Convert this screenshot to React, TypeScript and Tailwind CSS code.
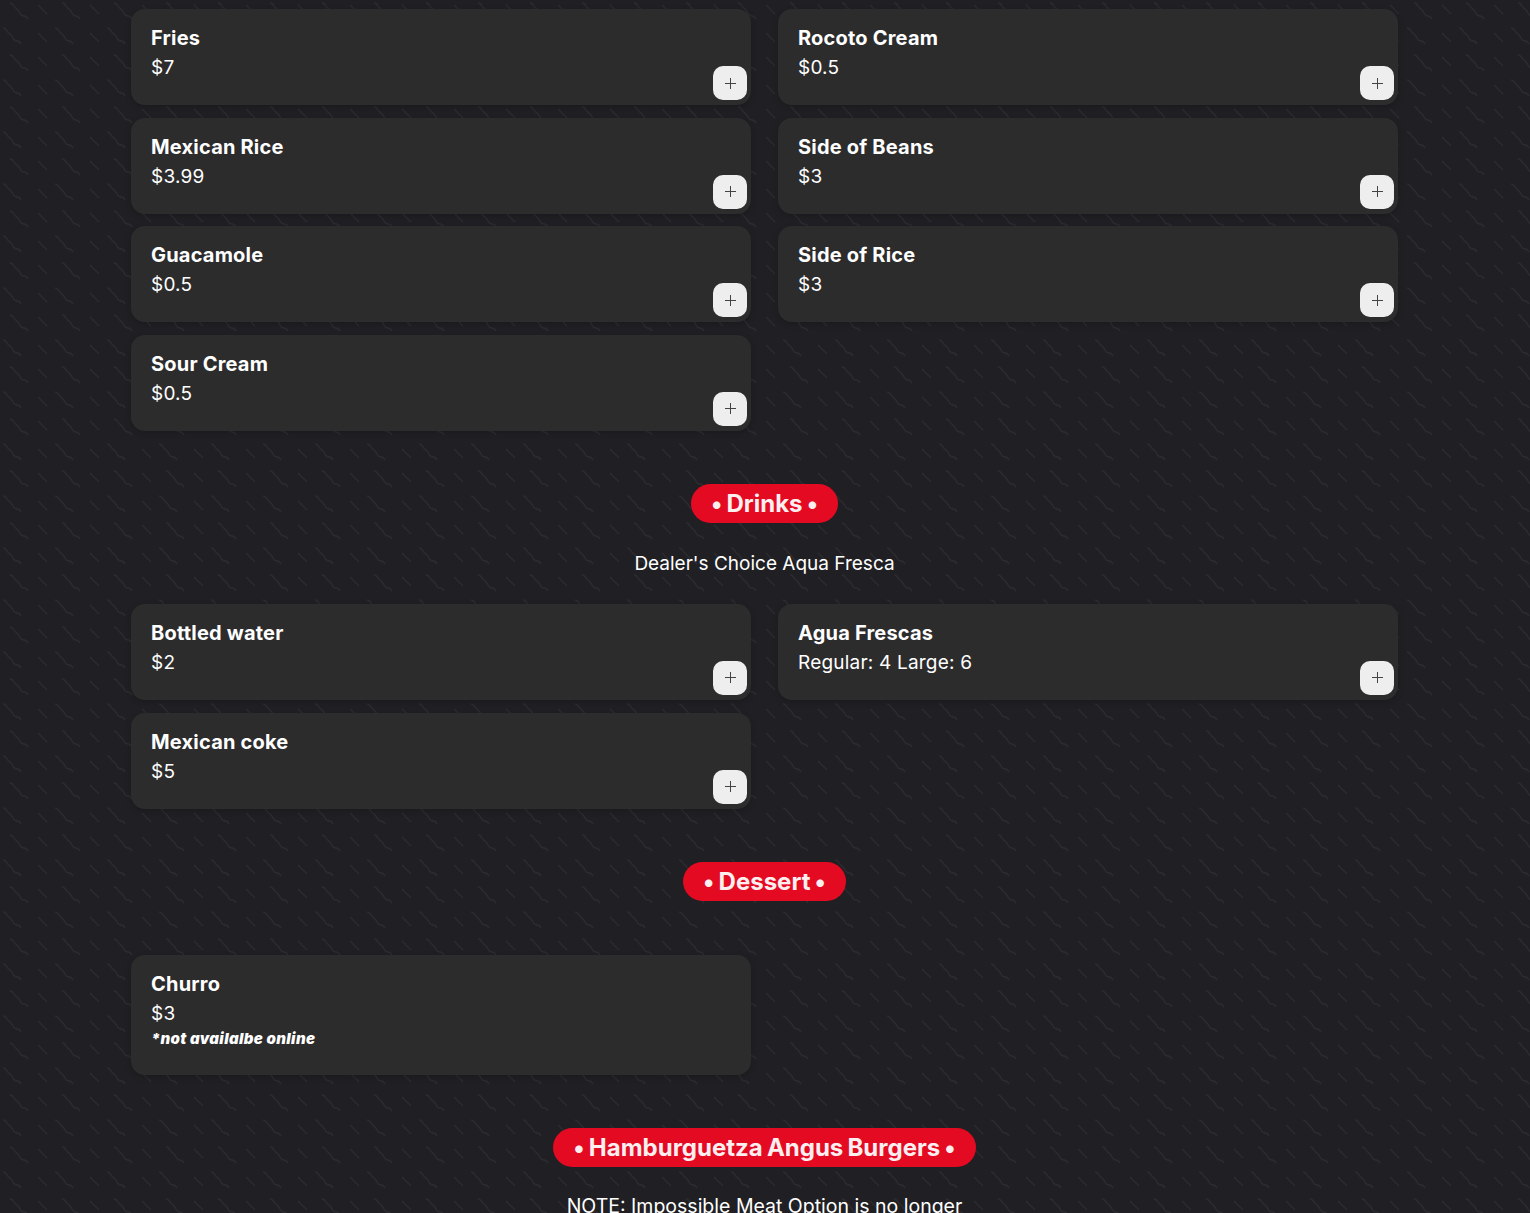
type Item = { name: string; price: string; note?: string; noAdd?: boolean };

const sides: Item[] = [
  { name: "Fries", price: "$7" },
  { name: "Rocoto Cream", price: "$0.5" },
  { name: "Mexican Rice", price: "$3.99" },
  { name: "Side of Beans", price: "$3" },
  { name: "Guacamole", price: "$0.5" },
  { name: "Side of Rice", price: "$3" },
  { name: "Sour Cream", price: "$0.5" },
];

const drinks: Item[] = [
  { name: "Bottled water", price: "$2" },
  { name: "Agua Frescas", price: "Regular: 4 Large: 6" },
  { name: "Mexican coke", price: "$5" },
];

const desserts: Item[] = [{ name: "Churro", price: "$3", note: "*not availalbe online", noAdd: true }];

const Card = ({ item }: { item: Item }) => (
  <div className="relative rounded-[14px] bg-[#2d2c2d] px-5 pt-[15px] pb-[23px] text-white shadow-[0_2px_6px_rgba(0,0,0,0.2)]">
    <h3 className="text-[20px] font-bold leading-[29px] tracking-[0.2px]">{item.name}</h3>
    <p className="text-[19px] leading-[29px] tracking-[0.2px]">{item.price}</p>
    {item.note && (
      <p className="mt-px mb-[3px] text-[15px] font-black italic leading-[20px] tracking-[0.35px]">{item.note}</p>
    )}
    {!item.noAdd && (
      <button className="absolute right-1 bottom-[5px] flex h-[34px] w-[34px] items-center justify-center rounded-[10px] bg-[#eeeeee]">
        <svg width="11" height="11" viewBox="0 0 11 11" stroke="#444" strokeWidth="1">
          <path d="M5.5 0v11M0 5.5h11" />
        </svg>
      </button>
    )}
  </div>
);

const Grid = ({ items }: { items: Item[] }) => (
  <div className="grid grid-cols-2 gap-x-[27px] gap-y-[12.67px]">
    {items.map((item) => (
      <Card key={item.name} item={item} />
    ))}
  </div>
);

const Pill = ({ children }: { children: string }) => (
  <div className="flex justify-center">
    <h2 className="rounded-full bg-[#e30a22] px-5 text-[24px] font-bold leading-[39px] text-[#fdeef0] [font-feature-settings:'calt'_0] [word-spacing:-1.5px]">
      • {children} •
    </h2>
  </div>
);

const wave = "c2 0 3 1 4 3s2 2 3 3 2 2 3 4 2 3 4 3 3 1 4 3";

export default function App() {
  return (
    <div
      className="relative h-[1213px] overflow-hidden bg-[#201f23] text-white"
      style={{ fontFamily: "Inter, 'Open Sans', sans-serif" }}
    >
      <svg className="absolute inset-0 h-full w-full" aria-hidden="true">
        <defs>
          <pattern id="waves" width="52" height="52" patternUnits="userSpaceOnUse">
            <g fill="none" stroke="#2c2b30" strokeWidth="1.3">
              <path d={`M10 3${wave}`} />
              <path d="M38 5l9 9" />
              <path d={`M3 28${wave}`} />
              <path d="M38 33l9 9" />
            </g>
          </pattern>
        </defs>
        <rect width="100%" height="100%" fill="url(#waves)" />
      </svg>

      <main className="relative ml-[131px] w-[1267px] pt-[9px]">
        <Grid items={sides} />

        <section className="mt-[53px]">
          <Pill>Drinks</Pill>
          <p className="mt-[28px] text-center text-[19px] leading-[26px]">Dealer's Choice Aqua Fresca</p>
          <div className="mt-[27px]">
            <Grid items={drinks} />
          </div>
        </section>

        <section className="mt-[53px]">
          <Pill>Dessert</Pill>
          <div className="mt-[54px]">
            <Grid items={desserts} />
          </div>
        </section>

        <section className="mt-[53px]">
          <Pill>Hamburguetza Angus Burgers</Pill>
          <p className="mt-[26px] text-center text-[19.5px] leading-[26px]">NOTE: Impossible Meat Option is no longer</p>
        </section>
      </main>
    </div>
  );
}
